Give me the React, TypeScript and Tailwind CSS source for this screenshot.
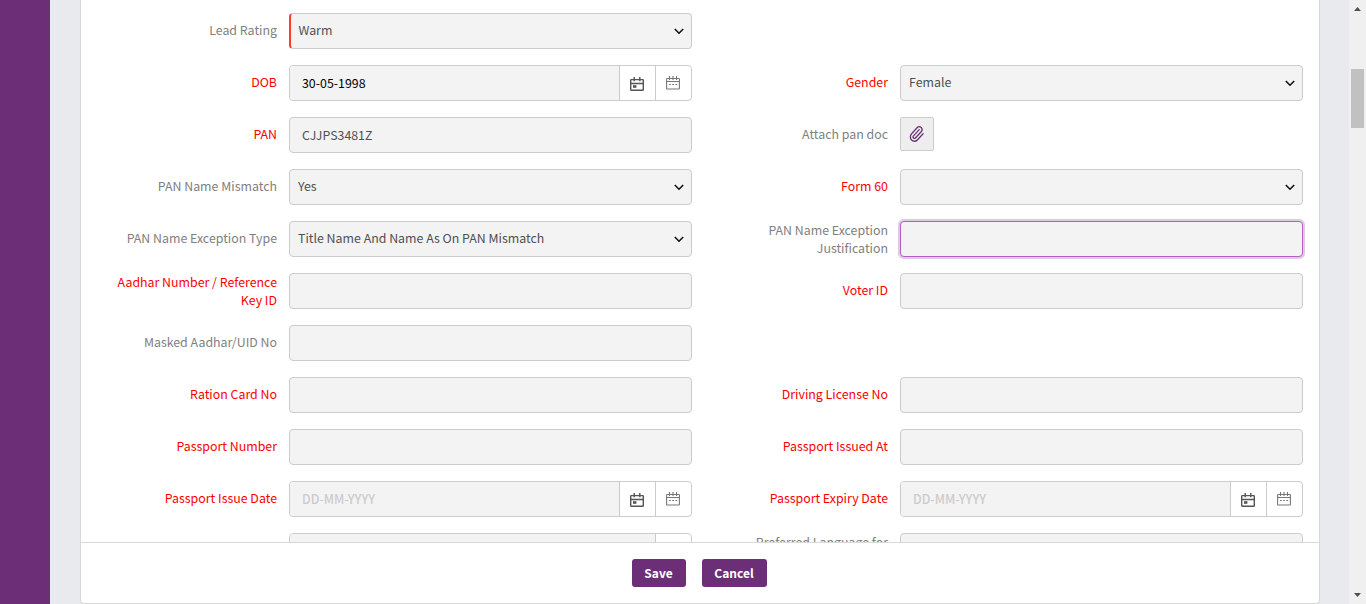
import React from "react";

type FieldKind = "select" | "text" | "date" | "month" | "attach";

interface Field {
  label: string[];
  kind: FieldKind;
  value?: string;
  placeholder?: string;
  red?: boolean;
  dark?: boolean;
  focused?: boolean;
  marked?: boolean;
}

const rows: [Field, Field | null][] = [
  [{ label: ["Lead Rating"], kind: "select", value: "Warm", marked: true }, null],
  [
    { label: ["DOB"], kind: "date", value: "30-05-1998", red: true, dark: true },
    { label: ["Gender"], kind: "select", value: "Female", red: true },
  ],
  [
    { label: ["PAN"], kind: "text", value: "CJJPS3481Z", red: true },
    { label: ["Attach pan doc"], kind: "attach" },
  ],
  [
    { label: ["PAN Name Mismatch"], kind: "select", value: "Yes" },
    { label: ["Form 60"], kind: "select", red: true },
  ],
  [
    { label: ["PAN Name Exception Type"], kind: "select", value: "Title Name And Name As On PAN Mismatch" },
    { label: ["PAN Name Exception", "Justification"], kind: "text", focused: true },
  ],
  [
    { label: ["Aadhar Number / Reference", "Key ID"], kind: "text", red: true },
    { label: ["Voter ID"], kind: "text", red: true },
  ],
  [{ label: ["Masked Aadhar/UID No"], kind: "text" }, null],
  [
    { label: ["Ration Card No"], kind: "text", red: true },
    { label: ["Driving License No"], kind: "text", red: true },
  ],
  [
    { label: ["Passport Number"], kind: "text", red: true },
    { label: ["Passport Issued At"], kind: "text", red: true },
  ],
  [
    { label: ["Passport Issue Date"], kind: "date", placeholder: "DD-MM-YYYY", red: true },
    { label: ["Passport Expiry Date"], kind: "date", placeholder: "DD-MM-YYYY", red: true },
  ],
  [
    { label: [""], kind: "month" },
    { label: ["Preferred Language for", "\u00a0"], kind: "text" },
  ],
];

function Chevron() {
  return (
    <svg width="10" height="7" viewBox="0 0 10 7" fill="none" stroke="#111" strokeWidth="1.6">
      <path d="M0.8 1 L5 5.2 L9.2 1" />
    </svg>
  );
}

function CalendarDay() {
  return (
    <svg width="14" height="14" viewBox="0 0 14 14" fill="none" stroke="#555" strokeWidth="1.4">
      <rect x="0.7" y="2.6" width="12.6" height="10.7" rx="0.6" />
      <path d="M0.7 6.5H13.3M4.2 0V4.2M9.8 0V4.2" />
      <rect x="3" y="8.2" width="3.4" height="2.6" fill="#555" stroke="none" />
    </svg>
  );
}

function CalendarDots() {
  return (
    <svg width="14" height="14" viewBox="0 0 14 14" fill="none" stroke="#777" strokeWidth="1.1">
      <rect x="0.6" y="2.5" width="12.8" height="10.5" rx="0.6" />
      <path d="M0.6 5.5H13.4M3.5 0V4M7 0V4M10.5 0V4" />
      <path d="M3 8.5H11.4" strokeDasharray="1.8 1.4" />
    </svg>
  );
}

function Clip() {
  return (
    <svg width="15" height="16" viewBox="1 1 22 22" preserveAspectRatio="none" fill="none" stroke="#6c2f77" strokeWidth="1.9" strokeLinecap="round" strokeLinejoin="round">
      <path d="m16 6-8.414 8.586a2 2 0 0 0 2.829 2.829l8.414-8.586a4 4 0 1 0-5.657-5.657l-8.379 8.551a6 6 0 1 0 8.485 8.485l8.379-8.551" />
    </svg>
  );
}

function Control({ field }: { field: Field }) {
  if (field.kind === "attach") {
    return (
      <button className="flex h-[34px] w-[34px] items-center justify-center rounded-[2px] border border-[#ccc] bg-[#eee] pr-px">
        <Clip />
      </button>
    );
  }
  if (field.kind === "select") {
    return (
      <div
        className={`flex h-9 w-[403px] items-center justify-between rounded border border-[#ccc] bg-[#f3f3f3] pr-[7.5px] text-[#505050] ${
          field.marked ? "border-l-2 border-l-[#ff3b30] pl-[7.5px]" : "pl-[8px]"
        }`}
      >
        <span className="pb-[2px]">{field.value}</span>
        <Chevron />
      </div>
    );
  }
  if (field.kind === "date" || field.kind === "month") {
    return (
      <div className="flex h-9 w-[403px] overflow-hidden rounded border border-[#ccc] bg-white">
        <div className={`flex grow items-center bg-[#f3f3f3] pl-3 ${field.dark ? "text-black" : "font-medium text-[#ccc]"}`}>
          {field.value ?? field.placeholder}
        </div>
        {field.kind === "date" && (
          <div className="flex w-9 items-center justify-center border-l border-[#ccc] pt-[2px] pr-px">
            <CalendarDay />
          </div>
        )}
        <div className="flex w-9 items-center justify-center border-l border-[#ccc] pr-px">
          <CalendarDots />
        </div>
      </div>
    );
  }
  return (
    <div
      className={`flex h-9 w-[403px] items-center rounded border bg-[#f3f3f3] pl-3 text-[#505050] ${
        field.focused ? "border-[#b45fc4] shadow-[0_0_0_2px_#dccbe1]" : "border-[#ccc]"
      }`}
    >
      {field.value}
    </div>
  );
}

function Cell({ field }: { field: Field | null }) {
  if (!field) return <div className="w-[611px]" />;
  return (
    <div className="flex h-9 w-[611px] shrink-0 gap-3">
      <div
        className={`flex w-[196px] shrink-0 flex-col justify-center whitespace-nowrap text-right leading-[18px] ${
          field.label.length === 1 ? "pb-[2px]" : ""
        } ${field.red ? "text-[#ff0000]" : "text-[#808080]"}`}
      >
        {field.label.map((line) => (
          <span key={line}>{line}</span>
        ))}
      </div>
      <Control field={field} />
    </div>
  );
}

export default function App() {
  return (
    <div className="flex h-[604px] w-[1366px] overflow-hidden bg-[#e8eaee] font-['Noto_Sans_CJK_SC',sans-serif] text-[12.38px] font-normal leading-[18px]">
      <aside className="w-[50px] shrink-0 bg-[#6c2f77]" />
      <main className="ml-[30px] flex h-[604px] w-[1240px] shrink-0 flex-col rounded-b border-x border-b border-[#d8d8d8] bg-white">
        <div className="flex h-[542px] shrink-0 flex-col gap-4 overflow-hidden pt-[13px]">
          {rows.map(([left, right], i) => (
            <div key={i} className="flex h-9 shrink-0">
              <Cell field={left} />
              <Cell field={right} />
            </div>
          ))}
        </div>
        <footer className="flex h-[61px] shrink-0 items-center justify-center gap-4 border-t border-[#d8d8d8] pr-[2px] text-white">
          <button className="h-7 w-[54px] rounded-[3px] bg-[#6c2f77] text-[12px] font-bold">Save</button>
          <button className="h-7 w-[65px] rounded-[3px] bg-[#6c2f77] text-[12px] font-bold">Cancel</button>
        </footer>
      </main>
      <div className="ml-[29px] flex w-[17px] shrink-0 flex-col items-center bg-[#f0f0f0]">
        <svg width="17" height="17" viewBox="0 0 17 17" fill="#505050">
          <path d="M5 11L8.5 7L12 11Z" />
        </svg>
        <div className="mt-[52px] h-[59px] w-[13px] bg-[#c1c1c1]" />
        <svg className="mt-auto" width="17" height="17" viewBox="0 0 17 17" fill="#505050">
          <path d="M5 6L8.5 10L12 6Z" />
        </svg>
      </div>
    </div>
  );
}
